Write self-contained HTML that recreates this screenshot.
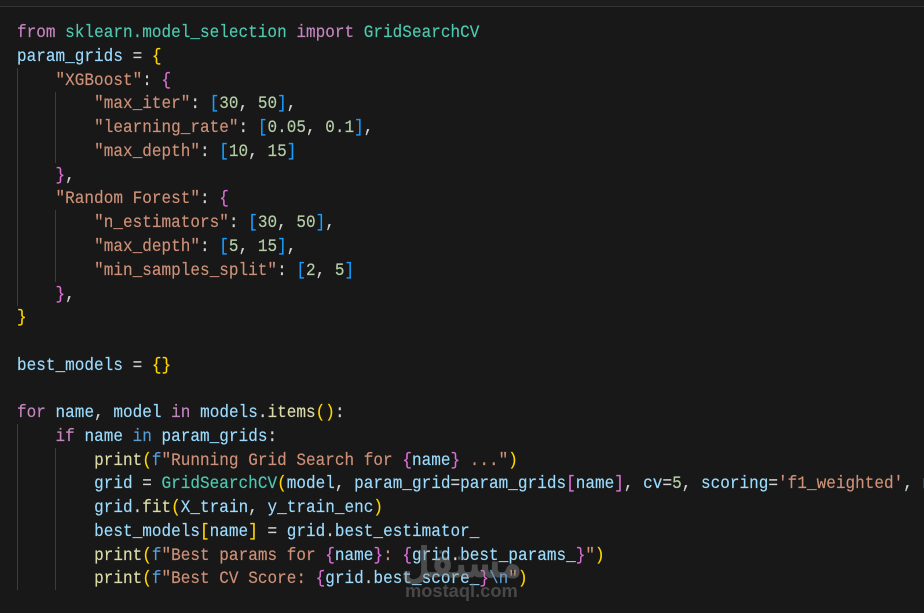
<!DOCTYPE html>
<html><head><meta charset="utf-8">
<style>
html,body{margin:0;padding:0;background:#181818;width:924px;height:613px;overflow:hidden}
#top{position:absolute;left:0;top:0;width:924px;height:6px;background:#1d1d1d;border-bottom:1px solid #333}
.g{position:absolute;width:1px;background:#3c3c3c}
#code{position:absolute;left:0;top:1px;width:924px;height:612px}
pre{position:absolute;left:0;margin:0;white-space:pre;font:16px/24px "Liberation Mono",monospace;letter-spacing:.03px;color:#d4d4d4;transform:scaleY(1.08);transform-origin:0 17px;-webkit-text-stroke:.15px currentColor}
.k{color:#c586c0}.v{color:#9cdcfe}.s{color:#ce9178}.n{color:#b5cea8}.c{color:#4ec9b0}.f{color:#dcdcaa}.b{color:#569cd6}
.y{color:#ffd700}.p{color:#da70d6}.u{color:#179fff}
#wm1{position:absolute;left:404px;top:540px;width:118px;text-align:center;font:bold 33px/46px "DejaVu Sans",sans-serif;color:rgba(140,140,140,.45);white-space:nowrap;transform:scaleY(1.3)}
#wm2{position:absolute;left:405px;top:580px;font:bold 18.3px/22px "Liberation Sans",sans-serif;color:rgba(120,120,120,.5);white-space:nowrap}
</style></head><body>
<div id="top"></div>
<div class="g" style="left:17px;top:68px;height:238px"></div>
<div class="g" style="left:55px;top:92px;height:71px"></div>
<div class="g" style="left:55px;top:210px;height:72px"></div>
<div class="g" style="left:17px;top:424px;height:166px"></div>
<div class="g" style="left:55px;top:448px;height:142px"></div>
<div id="code">
<pre style="left:17px;top:20px"><span class="k">from</span> <span class="c">sklearn.model_selection</span> <span class="k">import</span> <span class="c">GridSearchCV</span></pre>
<pre style="left:17px;top:44px"><span class="v">param_grids</span> = <span class="y">{</span></pre>
<pre style="left:17px;top:68px">    <span class="s">"XGBoost"</span>: <span class="p">{</span></pre>
<pre style="left:17px;top:91px">        <span class="s">"max_iter"</span>: <span class="u">[</span><span class="n">30</span>, <span class="n">50</span><span class="u">]</span>,</pre>
<pre style="left:17px;top:115px">        <span class="s">"learning_rate"</span>: <span class="u">[</span><span class="n">0.05</span>, <span class="n">0.1</span><span class="u">]</span>,</pre>
<pre style="left:17px;top:139px">        <span class="s">"max_depth"</span>: <span class="u">[</span><span class="n">10</span>, <span class="n">15</span><span class="u">]</span></pre>
<pre style="left:17px;top:163px">    <span class="p">}</span>,</pre>
<pre style="left:17px;top:186px">    <span class="s">"Random Forest"</span>: <span class="p">{</span></pre>
<pre style="left:17px;top:210px">        <span class="s">"n_estimators"</span>: <span class="u">[</span><span class="n">30</span>, <span class="n">50</span><span class="u">]</span>,</pre>
<pre style="left:17px;top:234px">        <span class="s">"max_depth"</span>: <span class="u">[</span><span class="n">5</span>, <span class="n">15</span><span class="u">]</span>,</pre>
<pre style="left:17px;top:258px">        <span class="s">"min_samples_split"</span>: <span class="u">[</span><span class="n">2</span>, <span class="n">5</span><span class="u">]</span></pre>
<pre style="left:17px;top:282px">    <span class="p">}</span>,</pre>
<pre style="left:17px;top:305px"><span class="y">}</span></pre>
<pre style="left:17px;top:353px"><span class="v">best_models</span> = <span class="y">{}</span></pre>
<pre style="left:17px;top:400px"><span class="k">for</span> <span class="v">name</span>, <span class="v">model</span> <span class="k">in</span> <span class="v">models</span>.<span class="f">items</span><span class="y">()</span>:</pre>
<pre style="left:17px;top:424px">    <span class="k">if</span> <span class="v">name</span> <span class="b">in</span> <span class="v">param_grids</span>:</pre>
<pre style="left:17px;top:448px">        <span class="f">print</span><span class="y">(</span><span class="b">f</span><span class="s">"Running Grid Search for </span><span class="p">{</span><span class="v">name</span><span class="p">}</span><span class="s"> ..."</span><span class="y">)</span></pre>
<pre style="left:17px;top:471px">        <span class="v">grid</span> = <span class="c">GridSearchCV</span><span class="y">(</span><span class="v">model</span>, <span class="v">param_grid</span>=<span class="v">param_grids</span><span class="p">[</span><span class="v">name</span><span class="p">]</span>, <span class="v">cv</span>=<span class="n">5</span>, <span class="v">scoring</span>=<span class="s">'f1_weighted'</span>, <span class="v">n</span></pre>
<pre style="left:17px;top:495px">        <span class="v">grid</span>.<span class="f">fit</span><span class="y">(</span><span class="v">X_train</span>, <span class="v">y_train_enc</span><span class="y">)</span></pre>
<pre style="left:17px;top:519px">        <span class="v">best_models</span><span class="y">[</span><span class="v">name</span><span class="y">]</span> = <span class="v">grid</span>.<span class="v">best_estimator_</span></pre>
<pre style="left:17px;top:543px">        <span class="f">print</span><span class="y">(</span><span class="b">f</span><span class="s">"Best params for </span><span class="p">{</span><span class="v">name</span><span class="p">}</span><span class="s">: </span><span class="p">{</span><span class="v">grid</span>.<span class="v">best_params_</span><span class="p">}</span><span class="s">"</span><span class="y">)</span></pre>
<pre style="left:17px;top:566px">        <span class="f">print</span><span class="y">(</span><span class="b">f</span><span class="s">"Best CV Score: </span><span class="p">{</span><span class="v">grid</span>.<span class="v">best_score_</span><span class="p">}</span><span class="b">\n</span><span class="s">"</span><span class="y">)</span></pre>
</div>
<div id="wm1" dir="rtl">مستقل</div>
<div id="wm2">mostaql.com</div>
</body></html>
